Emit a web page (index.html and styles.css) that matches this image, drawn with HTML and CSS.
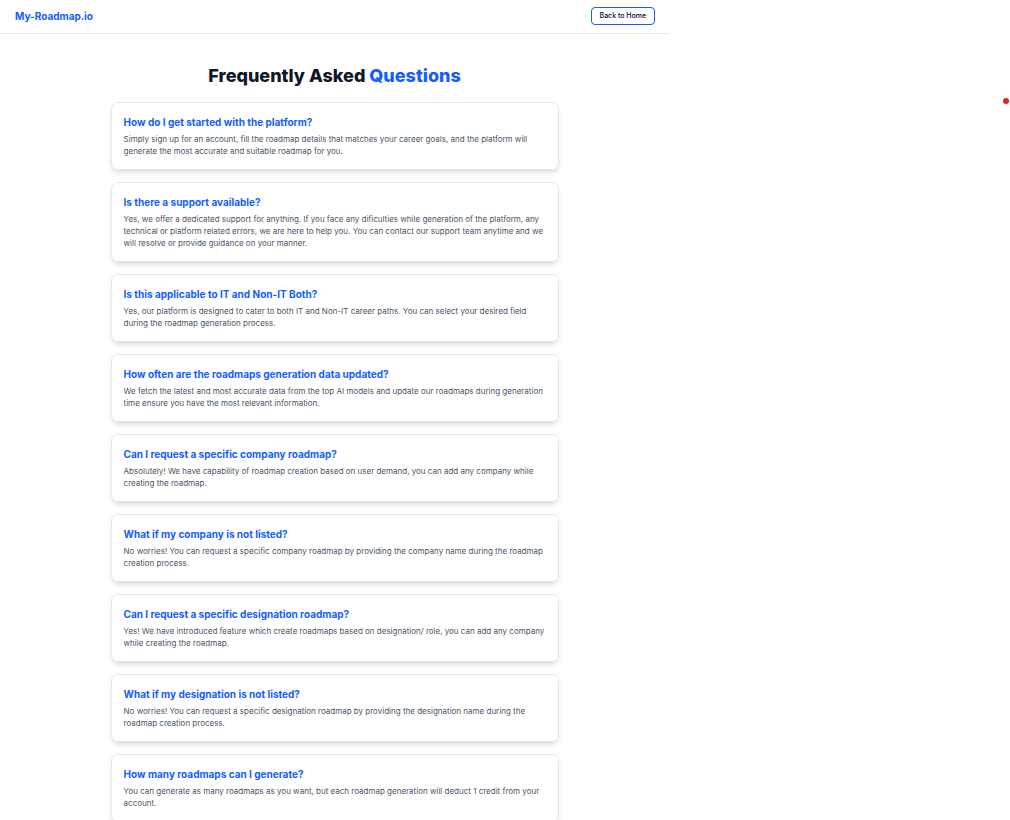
FILE: index.html
```html
<!DOCTYPE html>
<html lang="en">
<head>
<meta charset="utf-8">
<meta name="viewport" content="width=device-width, initial-scale=1">
<title>FAQ - My-Roadmap.io</title>
<link rel="stylesheet" href="styles.css">
</head>
<body>
<div class="page">
  <header class="topbar">
    <a class="brand" href="#">My-Roadmap.io</a>
    <button class="home-button" type="button">Back to Home</button>
  </header>
  <main class="faq">
    <h1 class="faq-title">Frequently Asked <span class="accent">Questions</span></h1>
    <div class="faq-list">
      <article class="card">
        <h2 class="question">How do I get started with the platform?</h2>
        <p class="answer">Simply sign up for an account, fill the roadmap details that matches your career goals, and the platform will generate the most accurate and suitable roadmap for you.</p>
      </article>
      <article class="card">
        <h2 class="question">Is there a support available?</h2>
        <p class="answer">Yes, we offer a dedicated support for anything. If you face any dificulties while generation of the platform, any technical or platform related errors, we are here to help you. You can contact our support team anytime and we will resolve or provide guidance on your manner.</p>
      </article>
      <article class="card">
        <h2 class="question">Is this applicable to IT and Non-IT Both?</h2>
        <p class="answer">Yes, our platform is designed to cater to both IT and Non-IT career paths. You can select your desired field during the roadmap generation process.</p>
      </article>
      <article class="card">
        <h2 class="question">How often are the roadmaps generation data updated?</h2>
        <p class="answer">We fetch the latest and most accurate data from the top AI models and update our roadmaps during generation time ensure you have the most relevant information.</p>
      </article>
      <article class="card">
        <h2 class="question">Can I request a specific company roadmap?</h2>
        <p class="answer">Absolutely! We have capability of roadmap creation based on user demand, you can add any company while creating the roadmap.</p>
      </article>
      <article class="card">
        <h2 class="question">What if my company is not listed?</h2>
        <p class="answer">No worries! You can request a specific company roadmap by providing the company name during the roadmap creation process.</p>
      </article>
      <article class="card">
        <h2 class="question">Can I request a specific designation roadmap?</h2>
        <p class="answer">Yes! We have introduced feature which create roadmaps based on designation/ role, you can add any company while creating the roadmap.</p>
      </article>
      <article class="card">
        <h2 class="question">What if my designation is not listed?</h2>
        <p class="answer">No worries! You can request a specific designation roadmap by providing the designation name during the roadmap creation process.</p>
      </article>
      <article class="card">
        <h2 class="question">How many roadmaps can I generate?</h2>
        <p class="answer">You can generate as many roadmaps as you want, but each roadmap generation will deduct 1 credit from your account.</p>
      </article>
    </div>
  </main>
</div>
<span class="marker"></span>
</body>
</html>
```

FILE: styles.css
```css
* {
  box-sizing: border-box;
}

html {
  scrollbar-width: none;
}

body {
  margin: 0;
  background: #fff;
  color: #101828;
  font-family: Inter, "Liberation Sans", sans-serif;
}

.page {
  width: 66.25%;
}

.topbar {
  display: flex;
  align-items: center;
  justify-content: space-between;
  padding: 7px 14px 8px 15px;
  border-bottom: 1px solid #e5e7eb;
}

.brand {
  color: #155dfc;
  font-size: 10px;
  font-weight: 700;
  line-height: 16px;
  text-decoration: none;
}

.home-button {
  padding: 2px 8px;
  border: 1px solid #155dfc;
  border-radius: 4px;
  background: #fff;
  color: #0a0a2a;
  font-family: inherit;
  font-size: 7px;
  font-weight: 500;
  line-height: 12px;
}

.faq {
  max-width: 448px;
  margin: 0 auto;
  padding: 32px 0;
}

.faq-title {
  margin: 0 0 16px;
  font-size: 18px;
  font-weight: 800;
  line-height: 20px;
  text-align: center;
}

.accent {
  color: #155dfc;
}

.faq-list {
  display: grid;
  gap: 12px;
}

.card {
  padding: 12px;
  border: 1px solid #e5e7eb;
  border-radius: 7px;
  box-shadow: 0 4px 6px -1px rgba(0, 0, 0, 0.1), 0 2px 4px -2px rgba(0, 0, 0, 0.1);
}

.question {
  margin: 0 0 4px;
  color: #155dfc;
  font-size: 10px;
  font-weight: 700;
  line-height: 14px;
}

.answer {
  margin: 0;
  color: #4a5565;
  font-size: 8px;
  line-height: 12px;
}

.marker {
  position: absolute;
  top: 98px;
  right: 1px;
  width: 6px;
  height: 6px;
  border-radius: 50%;
  background: #e81c1c;
}
```
